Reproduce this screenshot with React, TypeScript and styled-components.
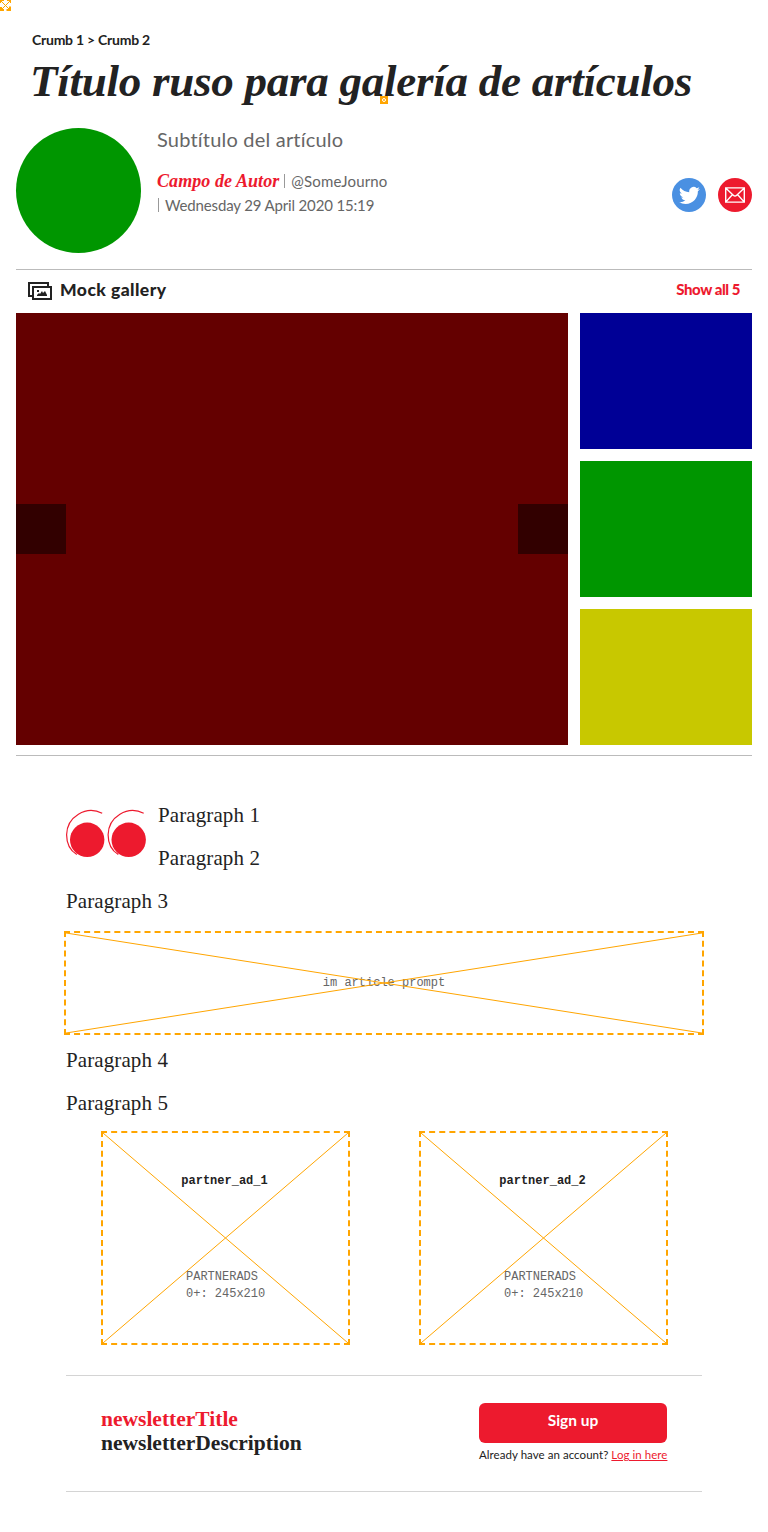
import React from "react";
import styled, { createGlobalStyle } from "styled-components";

const serif = '"Liberation Serif", "Times New Roman", serif';
const sans = 'Lato, "Open Sans", sans-serif';
const mono = '"Liberation Mono", "Courier New", monospace';
const red = "#ed1a2e";
const ink = "#222";

const GlobalStyle = createGlobalStyle`
  * { box-sizing: border-box; }
  body { margin: 0; background: #fff; color: ${ink}; font-family: ${sans}; }
  h1, h2, p { margin: 0; }
`;

const Page = styled.main`
  position: relative;
  width: 768px;
  height: 1532px;
  padding: 30px 16px 0;
  overflow: hidden;
`;

const Run = styled.span<{ $track?: number }>`
  letter-spacing: ${(p) => p.$track ?? 0}px;
`;

const Crumbs = styled.nav`
  height: 20px;
  padding-left: 16px;
  font: 700 14px/20px ${sans};
  white-space: pre;
`;

const Title = styled.h1`
  height: 62px;
  padding-left: 14px;
  font: italic 700 45px/62px ${serif};
  letter-spacing: -0.25px;
  white-space: nowrap;
`;

const CornerMarker = styled.svg`
  position: absolute;
  left: 0;
  top: 0;
`;

const SlotMarker = styled.svg`
  position: absolute;
  left: 380px;
  top: 96px;
`;

const Byline = styled.header`
  display: flex;
  height: 158px;
  padding-top: 16px;
  border-bottom: 1px solid #bbb;
`;

const Avatar = styled.div`
  width: 125px;
  height: 125px;
  border-radius: 50%;
  background: #009600;
`;

const Details = styled.div`
  flex: 1;
  margin-left: 16px;
  color: #666;
  font-size: 15px;
  line-height: 24px;
  white-space: nowrap;
`;

const Subtitle = styled.p`
  height: 41px;
  font-size: 20px;
  line-height: 23px;
`;

const Author = styled.span`
  color: ${red};
  font: italic 700 18px/24px ${serif};
  letter-spacing: 0.07px;
`;

const Bar = styled.span`
  display: inline-block;
  width: 1px;
  height: 14px;
  margin: 0 6px 0 5px;
  vertical-align: -1px;
  background: #999;
`;

const LeadBar = styled(Bar)`
  margin-left: 1px;
`;

const Share = styled.div`
  display: flex;
  gap: 12px;
  padding-top: 50px;
`;

const ShareButton = styled.a<{ $color: string }>`
  display: flex;
  align-items: center;
  justify-content: center;
  width: 34px;
  height: 34px;
  border-radius: 50%;
  background: ${(p) => p.$color};
`;

const Gallery = styled.section`
  height: 486px;
  border-bottom: 1px solid #bbb;
`;

const GalleryHead = styled.div`
  display: flex;
  align-items: center;
  height: 43px;
  padding: 0 12px 2px;
`;

const GalleryTitle = styled.h2`
  flex: 1;
  margin-left: 8px;
  padding-bottom: 1px;
  font: 900 17.5px/24px ${sans};
`;

const ShowAll = styled.a`
  padding-bottom: 3px;
  color: ${red};
  font: 900 15px/24px ${sans};
`;

const GalleryGrid = styled.div`
  display: grid;
  grid-template-columns: 552px 172px;
  gap: 12px;
  height: 432px;
`;

const Slide = styled.div`
  display: flex;
  align-items: center;
  justify-content: space-between;
  background: #640000;
`;

const SlideButton = styled.div`
  width: 50px;
  height: 50px;
  background: #320000;
`;

const Thumbs = styled.div`
  display: grid;
  grid-template-rows: repeat(3, 136px);
  gap: 12px;
`;

const Thumb = styled.div<{ $color: string }>`
  background: ${(p) => p.$color};
`;

const Article = styled.article`
  padding: 38px 50px 0;
`;

const Lead = styled.div`
  display: flex;
  gap: 12px;
`;

const QuoteMark = styled.svg`
  flex: none;
  margin-top: 15px;
`;

const Paragraph = styled.p`
  height: 43px;
  font: 400 21px/43px ${serif};
  letter-spacing: 0.1px;
`;

const Placeholder = styled.div`
  position: relative;
  border: 2px dashed orange;
  color: #666;
  font: 400 12px/17px ${mono};
`;

const PromptSlot = styled(Placeholder)`
  display: flex;
  align-items: center;
  justify-content: center;
  width: 640px;
  height: 104px;
  margin: 8px 0 4px -2px;
`;

const Cross = styled.svg`
  position: absolute;
  inset: 0;
  width: 100%;
  height: 100%;
`;

const Ads = styled.div`
  display: flex;
  justify-content: space-between;
  padding: 6px 34px 30px 35px;
`;

const AdSlot = styled(Placeholder)`
  width: 249px;
  height: 214px;
  padding-top: 40px;
`;

const AdName = styled.div`
  padding-right: 2px;
  color: ${ink};
  font-weight: 700;
  text-align: center;
`;

const AdInfo = styled.div`
  margin: 79px 0 0 83px;
`;

const Newsletter = styled.section`
  display: flex;
  justify-content: space-between;
  height: 117px;
  padding: 27px 35px 0;
  border: solid #d4d4d4;
  border-width: 1px 0;
`;

const Pitch = styled.div`
  padding-top: 4px;
  font: 700 21.5px/24px ${serif};
`;

const PitchTitle = styled.div`
  color: ${red};
`;

const SignUp = styled.div`
  width: 188px;
`;

const SignUpButton = styled.button`
  display: block;
  width: 188px;
  height: 40px;
  padding: 0 0 5px;
  border: 0;
  border-radius: 6px;
  background: ${red};
  color: #fff;
  font: 700 15.5px/35px ${sans};
`;

const Login = styled.p`
  margin-top: 4px;
  font-size: 11.5px;
  line-height: 16px;
  letter-spacing: 0.05px;
  white-space: nowrap;

  a {
    color: ${red};
    text-decoration: underline;
  }
`;

const CrossLines = () => (
  <Cross viewBox="0 0 100 100" preserveAspectRatio="none" stroke="orange">
    <path d="M0 0L100 100M0 100L100 0" vectorEffect="non-scaling-stroke" />
  </Cross>
);

const TwitterIcon = () => (
  <svg width="21" height="21" viewBox="0 0 24 24" fill="#fff">
    <path d="M23.95 4.57a10 10 0 0 1-2.82.77 4.96 4.96 0 0 0 2.16-2.72c-.95.55-2 .95-3.13 1.18a4.92 4.92 0 0 0-8.38 4.48C7.69 8.1 4.07 6.13 1.64 3.16a4.93 4.93 0 0 0 1.52 6.57 4.9 4.9 0 0 1-2.23-.61v.06c0 2.39 1.7 4.38 3.95 4.83a4.96 4.96 0 0 1-2.22.08 4.93 4.93 0 0 0 4.6 3.42A9.87 9.87 0 0 1 0 19.54a13.94 13.94 0 0 0 7.55 2.21c9.05 0 14-7.5 14-13.98 0-.21 0-.42-.02-.63a9.94 9.94 0 0 0 2.42-2.57z" />
  </svg>
);

const MailIcon = () => (
  <svg width="20" height="16" viewBox="0 0 20 16" fill="none" stroke="#fff" strokeWidth="1.4">
    <path d="M.7.9h18.6v14.2H.7zM.7.9l7.6 7.3q1.7 1.6 3.4 0L19.3.9M.7 15.1l6.8-7.6M19.3 15.1l-6.8-7.6" />
  </svg>
);

const GalleryIcon = () => (
  <svg width="24" height="18" viewBox="0 0 24 18" fill="none">
    <path d="M4 14H1V1h19v3" stroke={ink} strokeWidth="2" />
    <path d="M5 5h18v12H5z" stroke={ink} strokeWidth="2" />
    <path d="M9 14v-1l2-2 1 1 2-3 1 2 2-2 2 4v1zM9 8h2v2H9z" fill={ink} />
  </svg>
);

const ads = ["partner_ad_1", "partner_ad_2"];

export default function App() {
  return (
    <Page>
      <GlobalStyle />
      <Crumbs>
        <Run $track={-0.24}>Crumb 1 &gt; Crumb 2</Run>
      </Crumbs>
      <Title>Título ruso para galería de artículos</Title>
      <Byline>
        <Avatar />
        <Details>
          <Subtitle>
            <Run $track={0.2}>Subtítulo del artículo</Run>
          </Subtitle>
          <div>
            <Author>Campo de Autor</Author>
            <Bar />
            <Run $track={0.15}>@SomeJourno</Run>
          </div>
          <div>
            <LeadBar />
            <Run $track={-0.15}>Wednesday 29 April 2020 15:19</Run>
          </div>
        </Details>
        <Share>
          <ShareButton $color="#4a90e2">
            <TwitterIcon />
          </ShareButton>
          <ShareButton $color={red}>
            <MailIcon />
          </ShareButton>
        </Share>
      </Byline>
      <Gallery>
        <GalleryHead>
          <GalleryIcon />
          <GalleryTitle>
            <Run $track={0.45}>Mock gallery</Run>
          </GalleryTitle>
          <ShowAll>
            <Run $track={-0.45}>Show all 5</Run>
          </ShowAll>
        </GalleryHead>
        <GalleryGrid>
          <Slide>
            <SlideButton />
            <SlideButton />
          </Slide>
          <Thumbs>
            <Thumb $color="#000096" />
            <Thumb $color="#009600" />
            <Thumb $color="#c8c800" />
          </Thumbs>
        </GalleryGrid>
      </Gallery>
      <Article>
        <Lead>
          <QuoteMark width="80" height="49" viewBox="0 0 80 49" fill="none">
            {[0, 41.5].map((x) => (
              <g key={x} transform={`translate(${x} 0)`}>
                <circle cx="21.2" cy="30.8" r="17.2" fill={red} />
                <path
                  d="M36.2 4.2A24.6 24.6 0 0 0 .6 25.8C.6 34 4 41.5 10.8 45.6"
                  stroke={red}
                  strokeWidth="1.2"
                />
              </g>
            ))}
          </QuoteMark>
          <div>
            <Paragraph>Paragraph 1</Paragraph>
            <Paragraph>Paragraph 2</Paragraph>
          </div>
        </Lead>
        <Paragraph>Paragraph 3</Paragraph>
        <PromptSlot>
          im article prompt
          <CrossLines />
        </PromptSlot>
        <Paragraph>Paragraph 4</Paragraph>
        <Paragraph>Paragraph 5</Paragraph>
        <Ads>
          {ads.map((name) => (
            <AdSlot key={name}>
              <AdName>{name}</AdName>
              <AdInfo>
                PARTNERADS
                <br />
                0+: 245x210
              </AdInfo>
              <CrossLines />
            </AdSlot>
          ))}
        </Ads>
        <Newsletter>
          <Pitch>
            <PitchTitle>newsletterTitle</PitchTitle>
            <div>newsletterDescription</div>
          </Pitch>
          <SignUp>
            <SignUpButton>Sign up</SignUpButton>
            <Login>
              Already have an account? <a>Log in here</a>
            </Login>
          </SignUp>
        </Newsletter>
      </Article>
      <CornerMarker width="11" height="11" viewBox="0 0 11 11" stroke="orange" fill="none">
        <path d="M0 0L11 11M0 11L11 0" />
        <path d="M0 .5h4M7 .5h4M.5 0v3M10.5 0v3" />
        <path d="M0 10h4M6.5 10h4.5M1 7v4M10 6.5v4.5" strokeWidth="2" />
      </CornerMarker>
      <SlotMarker width="8" height="8" viewBox="0 0 8 8">
        <path d="M0 0h8v8H0z" fill="orange" />
        <circle cx="4" cy="4" r="1.5" fill="none" stroke="#fff" />
      </SlotMarker>
    </Page>
  );
}
